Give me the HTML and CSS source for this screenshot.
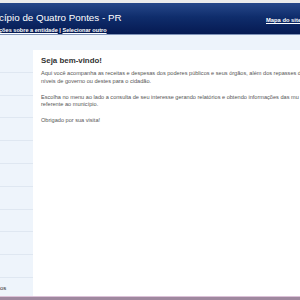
FILE: index.html
```html
<!DOCTYPE html>
<html>
<head>
  <meta charset="utf-8">
  <title>Portal da Transparência</title>
  <link rel="stylesheet" href="styles.css">
</head>
<body>
  <div class="topline"></div>
  <div class="header">
    <div class="brand">
      <div class="title">cípio de Quatro Pontes - PR</div>
      <div class="links"><a href="#">ções sobre a entidade</a> | <a href="#">Selecionar outro</a></div>
    </div>
    <a class="sitemap" href="#">Mapa do site</a>
  </div>
  <div class="band"></div>
  <div class="main">
    <ul class="menu">
      <li></li>
      <li></li>
      <li></li>
      <li></li>
      <li></li>
      <li></li>
      <li></li>
      <li></li>
      <li></li>
      <li></li>
      <li class="last">os</li>
    </ul>
    <div class="content">
      <h2>Seja bem-vindo!</h2>
      <p>Aqui você acompanha as receitas e despesas dos poderes públicos e seus órgãos, além dos repasses de níveis de governo ou destes para o cidadão.</p>
      <p>Escolha no menu ao lado a consulta de seu interesse gerando relatórios e obtendo informações das mu referente ao município.</p>
      <p>Obrigado por sua visita!</p>
    </div>
  </div>
  <div class="frame"></div>
</body>
</html>
```
FILE: styles.css
```css
    body {
      margin: 0;
      width: 300px;
      height: 300px;
      overflow: hidden;
      background: #fff;
      font-family: "Liberation Sans", Arial, sans-serif;
    }

    .topline {
      height: 3px;
      background: #ececec;
    }

    .header {
      height: 31px;
      display: flex;
      justify-content: space-between;
      background: linear-gradient(#27488a, #0f2d6c 45%, #061a52);
      border-bottom: 1px solid #7f93b8;
      color: #fff;
      overflow: hidden;
    }

    .brand {
      margin-left: -1px;
    }

    .title {
      font-size: 9.8px;
      padding-top: 8px;
      line-height: 13px;
    }

    .links {
      font-size: 5.6px;
      font-weight: bold;
      padding-top: 3px;
    }

    .links a, .sitemap {
      color: #fff;
    }

    .sitemap {
      font-size: 5.8px;
      font-weight: bold;
      padding-top: 14px;
      margin-right: -4px;
      width: 38px;
      white-space: nowrap;
      flex-shrink: 0;
    }

    .band {
      height: 15px;
      background: #edf3fb;
    }

    .main {
      display: flex;
      height: 246px;
    }

    .menu {
      list-style: none;
      margin: 0;
      padding: 0;
      width: 33px;
      flex-shrink: 0;
      background: #eef4fb;
    }

    .menu li {
      height: 21.8px;
      border-bottom: 1px solid #dfe7f1;
    }

    .menu .last {
      border: none;
      font-size: 6px;
      color: #333;
      line-height: 8px;
      padding-top: 6px;
    }

    .content {
      width: 275px;
      flex-shrink: 0;
      padding-left: 8px;
      padding-top: 6px;
      color: #555;
    }

    .content h2 {
      font-size: 7.9px;
      color: #333;
      margin: 0 0 5px;
    }

    .content p {
      font-size: 5.6px;
      line-height: 7.5px;
      margin: 0 0 8.5px;
    }

    .frame {
      height: 4px;
      background: #9f889f;
      border-top: 1px solid #dcc2d8;
    }
```
